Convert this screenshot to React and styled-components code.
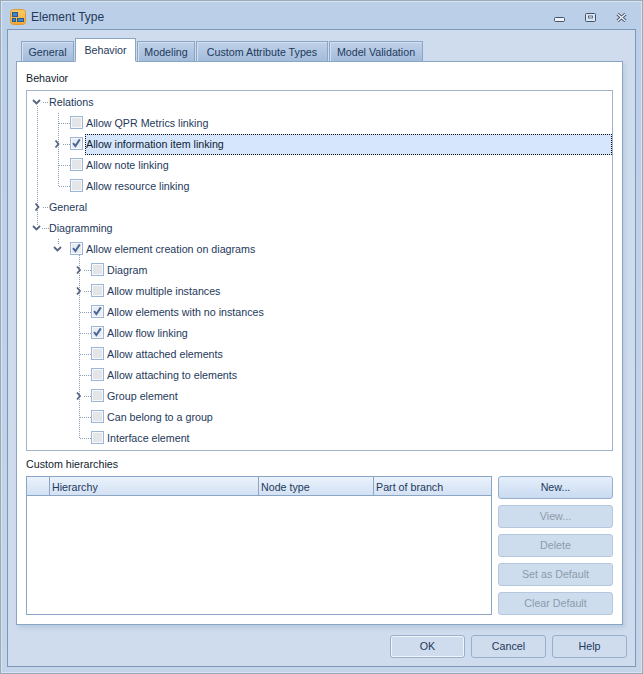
import React from 'react';
import styled, { createGlobalStyle } from 'styled-components';

const Global = createGlobalStyle`
  html, body { margin: 0; padding: 0; background: #c3d4e9; }
  * { box-sizing: border-box; }
`;

const Win = styled.div`
  width: 643px; height: 674px;
  display: flex; flex-direction: column;
  background: linear-gradient(#bccfe8 0, #bccfe8 30px, #c4d5ea 100%);
  border: 1px solid #9aa8b8;
  box-shadow: inset 0 0 0 1px #d8e4f2;
  font-family: "Liberation Sans", Arial, sans-serif;
  font-size: 10.7px;
  color: #1e395b;
  overflow: hidden;
`;
const TitleBar = styled.div`
  height: 28px; flex: none;
  display: flex; align-items: center;
  padding: 4px 15px 0 9px;
`;
const TitleText = styled.div`
  font-size: 12px; margin-left: 5px; flex: 1; color: #1e395b;
`;
const WinButtons = styled.div`
  display: flex; align-items: center; gap: 20px;
`;
const MinIcon = styled.svg`
  margin-top: 4px;
`;
const Client = styled.div`
  flex: 1; min-height: 0;
  margin: 0 6px 6px 6px;
  border: 1px solid #7d97b7;
  background: #cfdcee;
  display: flex; flex-direction: column;
  padding: 8px 12px 0 8px;
`;
const TabStrip = styled.div`
  height: 24px; flex: none;
  display: flex; align-items: flex-end;
  padding-left: 5px; gap: 1px;
  position: relative; z-index: 1;
  margin-bottom: -1px;
`;
const Tab = styled.div`
  height: ${p => p.$active ? '24px' : '21px'};
  width: ${p => p.$w}px;
  display: flex; align-items: center; justify-content: center;
  padding-top: ${p => p.$active ? '0' : '1px'};
  color: #1e395b;
  background: ${p => p.$active ? '#fff' : 'linear-gradient(#bfd1e8, #a3bcdb)'};
  border: 1px solid #8ba5c4;
  border-bottom: ${p => p.$active ? '1px solid #fff' : '1px solid #8ba5c4'};
  box-shadow: ${p => p.$active ? 'none' : 'inset 1px 1px 0 #d3e0f0'};
`;
const Page = styled.div`
  flex: none; height: 564px;
  background: #fff;
  border: 1px solid #8ba5c4;
  box-shadow: 2px 3px 4px rgba(90, 120, 160, .18);
  padding: 8px 9px 8px 9px;
  display: flex; flex-direction: column;
`;
const GroupLabel = styled.div`
  height: 20px; flex: none; color: #101c2c; line-height: 17px;
`;
const TreeBox = styled.div`
  position: relative;
  height: 361px; flex: none;
  border: 1px solid #a0b3ca;
  padding-top: 1px;
  display: flex; flex-direction: column;
`;
const Lines = styled.svg`
  position: absolute; left: 0; top: 0;
  pointer-events: none;
`;
const Row = styled.div`
  height: 21px; flex: none;
  display: flex; align-items: center;
  padding-left: ${p => p.$indent}px;
`;
const Check = styled.span`
  width: 13px; height: 13px; flex: none;
  border: 1px solid #9db5d6;
  background: ${p => p.$on ? '#e9edf2' : '#e3e5e8'};
  box-shadow: inset 0 0 0 1px #f6f8fa;
  margin: 0 2px 2px 0;
  display: flex; align-items: center; justify-content: center;
`;
const RowText = styled.span`
  height: 21px; line-height: 20px;
  padding: 0 2px 0 ${p => p.$check ? '1px' : '0'};
  color: #1e395b;
  white-space: nowrap;
  ${p => p.$focus ? `
    flex: 1; background: #d5e6fd; color: #0f1e33;
    outline: 1px dotted #111; outline-offset: -1px;
  ` : ''}
`;
const SecondLabel = styled.div`
  height: 25px; flex: none; color: #101c2c; padding-top: 5px; line-height: 17px;
`;
const Lower = styled.div`
  flex: none; height: 139px;
  display: flex; gap: 6px;
`;
const Grid = styled.div`
  width: 466px; flex: none;
  border: 1px solid #8ba5c4;
  display: flex; flex-direction: column;
`;
const GridHead = styled.div`
  height: 19px; flex: none;
  display: flex;
  background: linear-gradient(#eaf2fc, #d3e1f3);
  border-bottom: 1px solid #8ba5c4;
`;
const HeadCell = styled.div`
  width: ${p => p.$w}px;
  flex: ${p => p.$grow ? 1 : 'none'};
  border-right: ${p => p.$grow ? 'none' : '1px solid #8ba5c4'};
  padding-left: 2px; line-height: 20px;
  color: #1e395b;
`;
const Side = styled.div`
  width: 115px; flex: none;
  display: flex; flex-direction: column; gap: 6px;
`;
const Btn = styled.div`
  height: 23px; flex: none;
  display: flex; align-items: center; justify-content: center;
  padding-bottom: 2px;
  border-radius: 3px;
  border: 1px solid ${p => p.$off ? '#b4c7de' : '#98b0cd'};
  background: ${p => p.$off ? '#cedded' : 'linear-gradient(#e5effc, #c9daf0)'};
  color: ${p => p.$off ? '#8d9aab' : '#1e395b'};
`;
const Footer = styled.div`
  flex: 1;
  display: flex; justify-content: flex-end; gap: 6px;
  padding-top: 10px; margin-right: -4px;
`;
const FootBtn = styled.div`
  width: 75px; height: 23px;
  display: flex; align-items: center; justify-content: center;
  padding-bottom: 2px;
  border-radius: 3px;
  border: 1px solid #98b0cd;
  background: #cfdcee;
  box-shadow: ${p => p.$def ? 'inset 0 0 0 1px #eef5fd' : 'none'};
  color: #1e395b;
`;

const tick = (
  <svg width="11" height="11" viewBox="0 0 11 11">
    <path d="M2 5.2 L4.4 8 L8.8 1.4" fill="none" stroke="#4d6996" strokeWidth="2" />
  </svg>
);

const Box = ({ on }) => <Check $on={on}>{on ? tick : null}</Check>;

const H = (x, y, x2) => <path d={`M${x} ${y + .5}H${x2}`} />;
const V = (x, y, y2) => <path d={`M${x + .5} ${y}V${y2}`} />;
const Right = (x, y) => <path d={`M${x} ${y - 3.5}L${x + 3} ${y}L${x} ${y + 3.5}`} />;
const Down = (x, y) => <path d={`M${x} ${y - 2}L${x + 3.5} ${y + 1.5}L${x + 7} ${y - 2}`} />;

const TreeDrawing = () => (
  <Lines width="584" height="359" viewBox="27 91 584 359">
    <g stroke="#8c9fb8" strokeDasharray="1 1" fill="none" shapeRendering="crispEdges">
      {V(37, 106, 225)}
      {H(43, 102, 49)}
      {H(43, 207, 49)}
      {H(42, 228, 49)}
      {V(58, 113, 186)}
      {H(59, 123, 70)}
      {H(63, 144, 70)}
      {H(59, 165, 70)}
      {H(59, 186, 70)}
      {V(58, 239, 245)}
      {V(79, 255, 438)}
      {H(84, 270, 91)}
      {H(84, 291, 91)}
      {H(80, 312, 91)}
      {H(80, 333, 91)}
      {H(80, 354, 91)}
      {H(80, 375, 91)}
      {H(84, 396, 91)}
      {H(80, 417, 91)}
      {H(80, 438, 91)}
    </g>
    <g stroke="#56647e" strokeWidth="1.8" fill="none">
      {Down(33, 102)}
      {Right(35.5, 207)}
      {Down(33, 228)}
      {Right(55.5, 144)}
      {Down(54, 249)}
      {Right(77, 270)}
      {Right(77, 291)}
      {Right(77, 396)}
    </g>
  </Lines>
);

const tree = [
  [22, null, 'Relations'],
  [43, false, 'Allow QPR Metrics linking'],
  [43, true, 'Allow information item linking', true],
  [43, false, 'Allow note linking'],
  [43, false, 'Allow resource linking'],
  [22, null, 'General'],
  [22, null, 'Diagramming'],
  [43, true, 'Allow element creation on diagrams'],
  [64, false, 'Diagram'],
  [64, false, 'Allow multiple instances'],
  [64, true, 'Allow elements with no instances'],
  [64, true, 'Allow flow linking'],
  [64, false, 'Allow attached elements'],
  [64, false, 'Allow attaching to elements'],
  [64, false, 'Group element'],
  [64, false, 'Can belong to a group'],
  [64, false, 'Interface element'],
];

const AppIcon = () => (
  <svg width="16" height="16" viewBox="0 0 16 16">
    <defs>
      <linearGradient id="ico" x1="0" y1="0" x2="0" y2="1">
        <stop offset="0" stopColor="#fdcc6a" />
        <stop offset="1" stopColor="#f4a634" />
      </linearGradient>
    </defs>
    <rect x=".5" y=".5" width="15" height="15" rx="3" fill="url(#ico)" stroke="#e09a30" />
    <rect x="2.5" y="3.5" width="5" height="4" fill="#3d86c8" stroke="#2a5a90" />
    <rect x="7.5" y="9.5" width="6" height="3" fill="#3d86c8" stroke="#2a5a90" />
    <rect x="2.5" y="9.5" width="3" height="3" fill="#3d86c8" stroke="#2a5a90" />
  </svg>
);

export default function App() {
  return (
    <Win>
      <Global />
      <TitleBar>
        <AppIcon />
        <TitleText>Element Type</TitleText>
        <WinButtons>
          <MinIcon width="11" height="5" viewBox="0 0 11 5"><rect x=".5" y=".5" width="10" height="4" rx="1" fill="#eef3fa" stroke="#44536b" /></MinIcon>
          <svg width="11" height="9" viewBox="0 0 11 9"><rect x=".5" y=".5" width="10" height="8" rx="1" fill="#dbe6f4" stroke="#44536b" /><rect x="3.5" y="3" width="4" height="2" fill="#eef3fa" stroke="#44536b" strokeWidth=".8" /></svg>
          <svg width="11" height="9" viewBox="0 0 11 9"><path d="M1.5 1L9.5 8M9.5 1L1.5 8" stroke="#44536b" strokeWidth="3.2" /><path d="M1.5 1L9.5 8M9.5 1L1.5 8" stroke="#f1f5fb" strokeWidth="1.4" /></svg>
        </WinButtons>
      </TitleBar>
      <Client>
        <TabStrip>
          <Tab $w={53}>General</Tab>
          <Tab $active $w={61}>Behavior</Tab>
          <Tab $w={58}>Modeling</Tab>
          <Tab $w={132}>Custom Attribute Types</Tab>
          <Tab $w={94}>Model Validation</Tab>
        </TabStrip>
        <Page>
          <GroupLabel>Behavior</GroupLabel>
          <TreeBox>
            <TreeDrawing />
            {tree.map(([indent, check, label, focus]) => (
              <Row key={label} $indent={indent}>
                {check !== null && <Box on={check} />}
                <RowText $check={check !== null} $focus={focus}>{label}</RowText>
              </Row>
            ))}
          </TreeBox>
          <SecondLabel>Custom hierarchies</SecondLabel>
          <Lower>
            <Grid>
              <GridHead>
                <HeadCell $w={23} />
                <HeadCell $w={209}>Hierarchy</HeadCell>
                <HeadCell $w={115}>Node type</HeadCell>
                <HeadCell $grow>Part of branch</HeadCell>
              </GridHead>
            </Grid>
            <Side>
              <Btn>New...</Btn>
              <Btn $off>View...</Btn>
              <Btn $off>Delete</Btn>
              <Btn $off>Set as Default</Btn>
              <Btn $off>Clear Default</Btn>
            </Side>
          </Lower>
        </Page>
        <Footer>
          <FootBtn $def>OK</FootBtn>
          <FootBtn>Cancel</FootBtn>
          <FootBtn>Help</FootBtn>
        </Footer>
      </Client>
    </Win>
  );
}
